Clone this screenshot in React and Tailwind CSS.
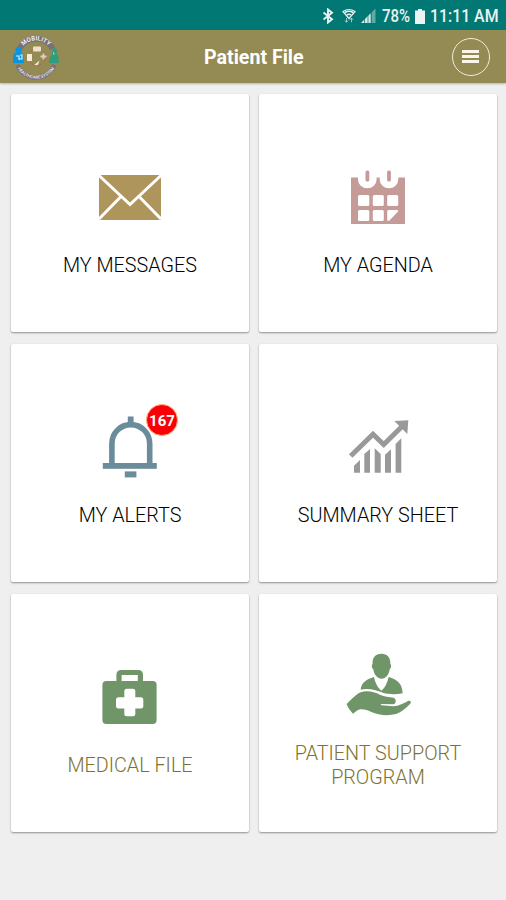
function MailIcon() {
  return (
    <svg viewBox="0 0 120 104" className="w-[120px] h-[104px]">
      <rect x="29" y="26" width="62" height="45" rx="1.5" fill="#ad955c" />
      <g fill="none" stroke="#fff" strokeWidth="3">
        <path d="M28.5 26 L60 55.5 L91.5 26" />
        <path d="M50.5 48 L29 70" />
        <path d="M69.5 48 L91 70" />
      </g>
    </svg>
  );
}

function AgendaIcon() {
  return (
    <svg viewBox="0 0 120 104" className="w-[120px] h-[104px]">
      <path d="M33 28.5 H87 V75 H33 Z" fill="#c59b98" />
      <g fill="#fff">
        <path d="M40 27 V30.5 A9.3 8.7 0 0 0 58.6 30.5 V27 Z" />
        <path d="M61.7 27 V30.5 A9.3 8.7 0 0 0 80.3 30.5 V27 Z" />
        <rect x="40" y="46" width="11.3" height="11" rx="1.5" />
        <rect x="54.8" y="46" width="11" height="11" rx="1.5" />
        <rect x="69.2" y="46" width="11" height="11" rx="1.5" />
        <rect x="40" y="61" width="11.3" height="11" rx="1.5" />
        <rect x="54.8" y="61" width="11" height="11" rx="1.5" />
        <path d="M70.5 61 H79.5 Q80.3 61 80 62.5 L71 72 Q69.2 72 69.2 70.5 V62.5 Q69.2 61 70.5 61 Z" />
      </g>
      <g fill="#c59b98">
        <rect x="47.5" y="21.5" width="3.8" height="11" rx="1.6" />
        <rect x="69.1" y="21.5" width="3.8" height="11" rx="1.6" />
      </g>
    </svg>
  );
}

function BellIcon() {
  return (
    <svg viewBox="0 0 120 104" className="w-[120px] h-[104px]">
      <path d="M41.9 66 V44.5 A18.9 18.9 0 0 1 79.7 44.5 V66" fill="none" stroke="#6a8c9b" strokeWidth="5.6" />
      <g fill="#6a8c9b">
        <rect x="57.8" y="17.5" width="5.8" height="7" />
        <rect x="32.8" y="64" width="54" height="5.8" />
        <rect x="54.8" y="72.4" width="11.6" height="6" />
      </g>
    </svg>
  );
}

function ChartIcon() {
  return (
    <svg viewBox="0 0 120 104" className="w-[120px] h-[104px]">
      <path d="M32.7 57 L55 35.3 L65.7 45.5 L84 27.5" fill="none" stroke="#999" strokeWidth="5" />
      <g fill="#999">
        <path d="M76.3 22 L90.3 21.3 L89.3 35 Z" />
        <path d="M36 73.7 V66.7 L42 61 V73.7 Z" />
        <path d="M46.3 73.7 V55 L52 50 V73.7 Z" />
        <path d="M56.7 73.7 V49.3 L62.7 55 V73.7 Z" />
        <path d="M67 73.7 V55.7 L73 50.3 V73.7 Z" />
        <path d="M77.6 73.7 V45 L83.3 39.3 V73.7 Z" />
      </g>
    </svg>
  );
}

function MedicalIcon() {
  return (
    <svg viewBox="0 0 120 104" className="w-[120px] h-[104px]">
      <path d="M49 33 V26 Q49 23.5 51.5 23.5 H68 Q70.4 23.5 70.4 26 V33" fill="none" stroke="#6f9569" strokeWidth="5.2" />
      <rect x="32.4" y="32" width="54.2" height="43" rx="4" fill="#6f9569" />
      <rect x="46" y="48.2" width="27.3" height="11.4" rx="2.5" fill="#fff" />
      <rect x="54.3" y="39.8" width="11" height="27.4" rx="2.5" fill="#fff" />
    </svg>
  );
}

function SupportIcon() {
  return (
    <svg viewBox="-36 -24 360 312" className="w-[120px] h-[104px]" fill="#6f9569">
      <path d="M154 26 C172 26 182 38 181 56 C185 60 183 70 179 73 C177 90 167 101 155 101 C142 101 132 90 130 73 C125 70 124 60 128 56 C126 38 137 26 154 26 Z" />
      <path d="M92 134 C94 113 108 104 132 96 C135 113 144 129 154 137 C165 129 172 113 176 96 C202 104 217 116 218 145 C197 149 176 148 161 144 C140 136 117 129 92 134 Z" />
      <path d="M50 177 C66 162 78 148 92 142 C111 135 133 141 150 149 C163 155 177 156 191 158 C200 162 199 176 190 178 L155 177 C151 177 151 181 155 181 L190 184 C207 183 222 174 234 168 C240 166 245 170 242 175 C229 190 214 202 198 207 C174 213 145 211 124 201 C110 194 97 191 86 194 C79 197 74 202 69 206 C61 198 54 188 50 177 Z" />
    </svg>
  );
}

function Logo() {
  return (
    <svg viewBox="0 0 48 48" className="w-12 h-12">
      <defs>
        <path id="logo-top" d="M8.2 19 A16.5 16.5 0 0 1 39.8 19" />
        <path id="logo-bottom" d="M4 32 A21.5 21.5 0 0 0 44 32" />
      </defs>
      <path d="M7.5 16 A18.5 18.5 0 0 1 40.5 16" fill="none" stroke="#77727a" strokeWidth="6" />
      <path d="M5.5 32 A20 20 0 0 0 42.5 32" fill="none" stroke="#77727a" strokeWidth="4.5" />
      <text fontSize="6.2" fontWeight="700" fill="#eeecef" fontFamily="Roboto, sans-serif">
        <textPath href="#logo-top" startOffset="50%" textAnchor="middle">MOBILITY</textPath>
      </text>
      <text fontSize="4.2" fontWeight="700" fill="#e4dfe2" fontFamily="Roboto, sans-serif">
        <textPath href="#logo-bottom" startOffset="50%" textAnchor="middle">HEALTHCARE SYSTEM</textPath>
      </text>
      <circle cx="25" cy="24" r="8.5" fill="none" stroke="#bd6836" strokeWidth="1" strokeDasharray="5 3" />
      <circle cx="6.5" cy="17" r="3" fill="#0795df" />
      <path d="M1 30 V23 Q2 19 6 19 H9 Q12 21 12 30 Z" fill="#0795df" />
      <path d="M4 23 H7 V27 M8 22 H10 V26 H7" fill="none" stroke="#d8effa" strokeWidth="1.2" />
      <path d="M42 15.5 Q44.5 14.5 45 17.5 Q44 19.5 46 22.5 L47 30 H37 Q37 25 40 21.5 Q39 17.5 42 15.5 Z" fill="#319c7c" />
      <path d="M41.5 19 L42 22" stroke="#a6ddbc" strokeWidth="1" />
      <rect x="21" y="13.5" width="8" height="5" rx="1" fill="#eee0cc" />
      <rect x="15" y="21" width="5" height="7" fill="#f7ead7" />
      <path d="M28.5 23.5 H34.5 M31.5 20.5 V26.5" stroke="#d9d2ce" strokeWidth="1.8" />
      <path d="M22 32 L27.5 27.5 L26 32 Z" fill="#eee5d8" />
    </svg>
  );
}

function StatusBar() {
  return (
    <div className="h-[30px] bg-[#017874] flex items-center justify-end pr-2 pt-0.5 text-[#e9f4f3]">
      <svg viewBox="0 0 12 16" className="w-3 h-4 mr-2" fill="none" stroke="currentColor" strokeWidth="1.9">
        <path d="M1.5 4.5 L10 11.3 L6 14.5 V1.5 L10 4.7 L1.5 11.5" />
      </svg>
      <svg viewBox="0 0 14 16" className="w-3.5 h-4 mr-1" fill="none" stroke="currentColor">
        <path d="M1 3.5 Q7 -0.5 13 3.5 L7 10.5 Z" strokeWidth="1.2" />
        <path d="M3 4.5 Q7 2 11 4.5 M5 7 Q7 5.5 9 7" strokeWidth="1.5" />
        <path d="M4.5 10 V14 M3 12.5 L4.5 14.3 L6 12.5 M9.5 14.3 V10.3 M8 11.8 L9.5 10 L11 11.8" strokeWidth="0.9" opacity="0.7" />
      </svg>
      <svg viewBox="0 0 16 16" className="w-4 h-4 mr-1.5" fill="currentColor">
        <path d="M1 15 L15.5 0.5 V15 Z" opacity="0.4" />
        <path d="M1 15 L10.5 5.5 V15 Z" opacity="0.85" />
        <path d="M4.5 10 V15 M8 7 V15 M11.5 4 V15" stroke="#017874" strokeWidth="0.7" />
      </svg>
      <span className="w-[30px] text-[18px] font-medium leading-none whitespace-nowrap">
        <span className="inline-block origin-left scale-x-[0.83]">78%</span>
      </span>
      <svg viewBox="0 0 10 15" className="w-2.5 h-[15px] ml-[3px] mr-[5px]" fill="currentColor">
        <path d="M3 0 H7 V1.5 H10 V15 H0 V1.5 H3 Z" />
      </svg>
      <span className="w-[68px] text-[18px] font-medium leading-none whitespace-nowrap">
        <span className="inline-block origin-left scale-x-[0.88]">11:11 AM</span>
      </span>
    </div>
  );
}

function Header() {
  return (
    <header className="h-[53px] bg-[#938a54] flex items-center justify-between pl-3 pr-4 shadow-[0_1px_2px_rgba(0,0,0,0.25)]">
      <Logo />
      <h1 className="text-[20px] font-bold text-white mr-[5px] scale-x-[0.98]">Patient File</h1>
      <button className="w-[38px] h-[38px] rounded-full border-[1.5px] border-[#f3ecd9] flex flex-col items-center justify-center gap-[2px]">
        <span className="w-[17px] h-[3px] bg-[#fbf6e9]" />
        <span className="w-[17px] h-[3px] bg-[#fbf6e9]" />
        <span className="w-[17px] h-[3px] bg-[#fbf6e9]" />
      </button>
    </header>
  );
}

const tiles = [
  { label: "MY MESSAGES", Icon: MailIcon },
  { label: "MY AGENDA", Icon: AgendaIcon },
  { label: "MY ALERTS", Icon: BellIcon, badge: 167 },
  { label: "SUMMARY SHEET", Icon: ChartIcon },
  { label: "MEDICAL FILE", Icon: MedicalIcon, olive: true },
  { label: "PATIENT SUPPORT PROGRAM", Icon: SupportIcon, olive: true },
];

function Tile({ label, Icon, badge, olive }) {
  return (
    <div className="h-[238px] bg-white rounded-[2px] flex flex-col items-center justify-center shadow-[0_1px_2px_rgba(0,0,0,0.4)]">
      <div className="relative">
        <Icon />
        {badge && (
          <span className="absolute left-[76px] top-[5px] w-8 h-8 pt-0.5 rounded-full bg-[#fb0007] border border-[#ffb27a] text-white text-[15px] font-bold flex items-center justify-center">
            {badge}
          </span>
        )}
      </div>
      <p className={`w-[180px] pt-px -mb-px text-center text-[19.8px] font-light leading-6 ${olive ? "text-[#7d7230]" : "text-black"}`}>
        {label}
      </p>
    </div>
  );
}

export default function App() {
  return (
    <div className="w-full h-[900px] bg-[#efefef] font-['Roboto',sans-serif] overflow-hidden">
      <StatusBar />
      <Header />
      <main className="grid grid-cols-2 gap-x-2.5 gap-y-3 pt-[11px] pl-[11px] pr-[9px]">
        {tiles.map((tile) => (
          <Tile key={tile.label} {...tile} />
        ))}
      </main>
    </div>
  );
}
